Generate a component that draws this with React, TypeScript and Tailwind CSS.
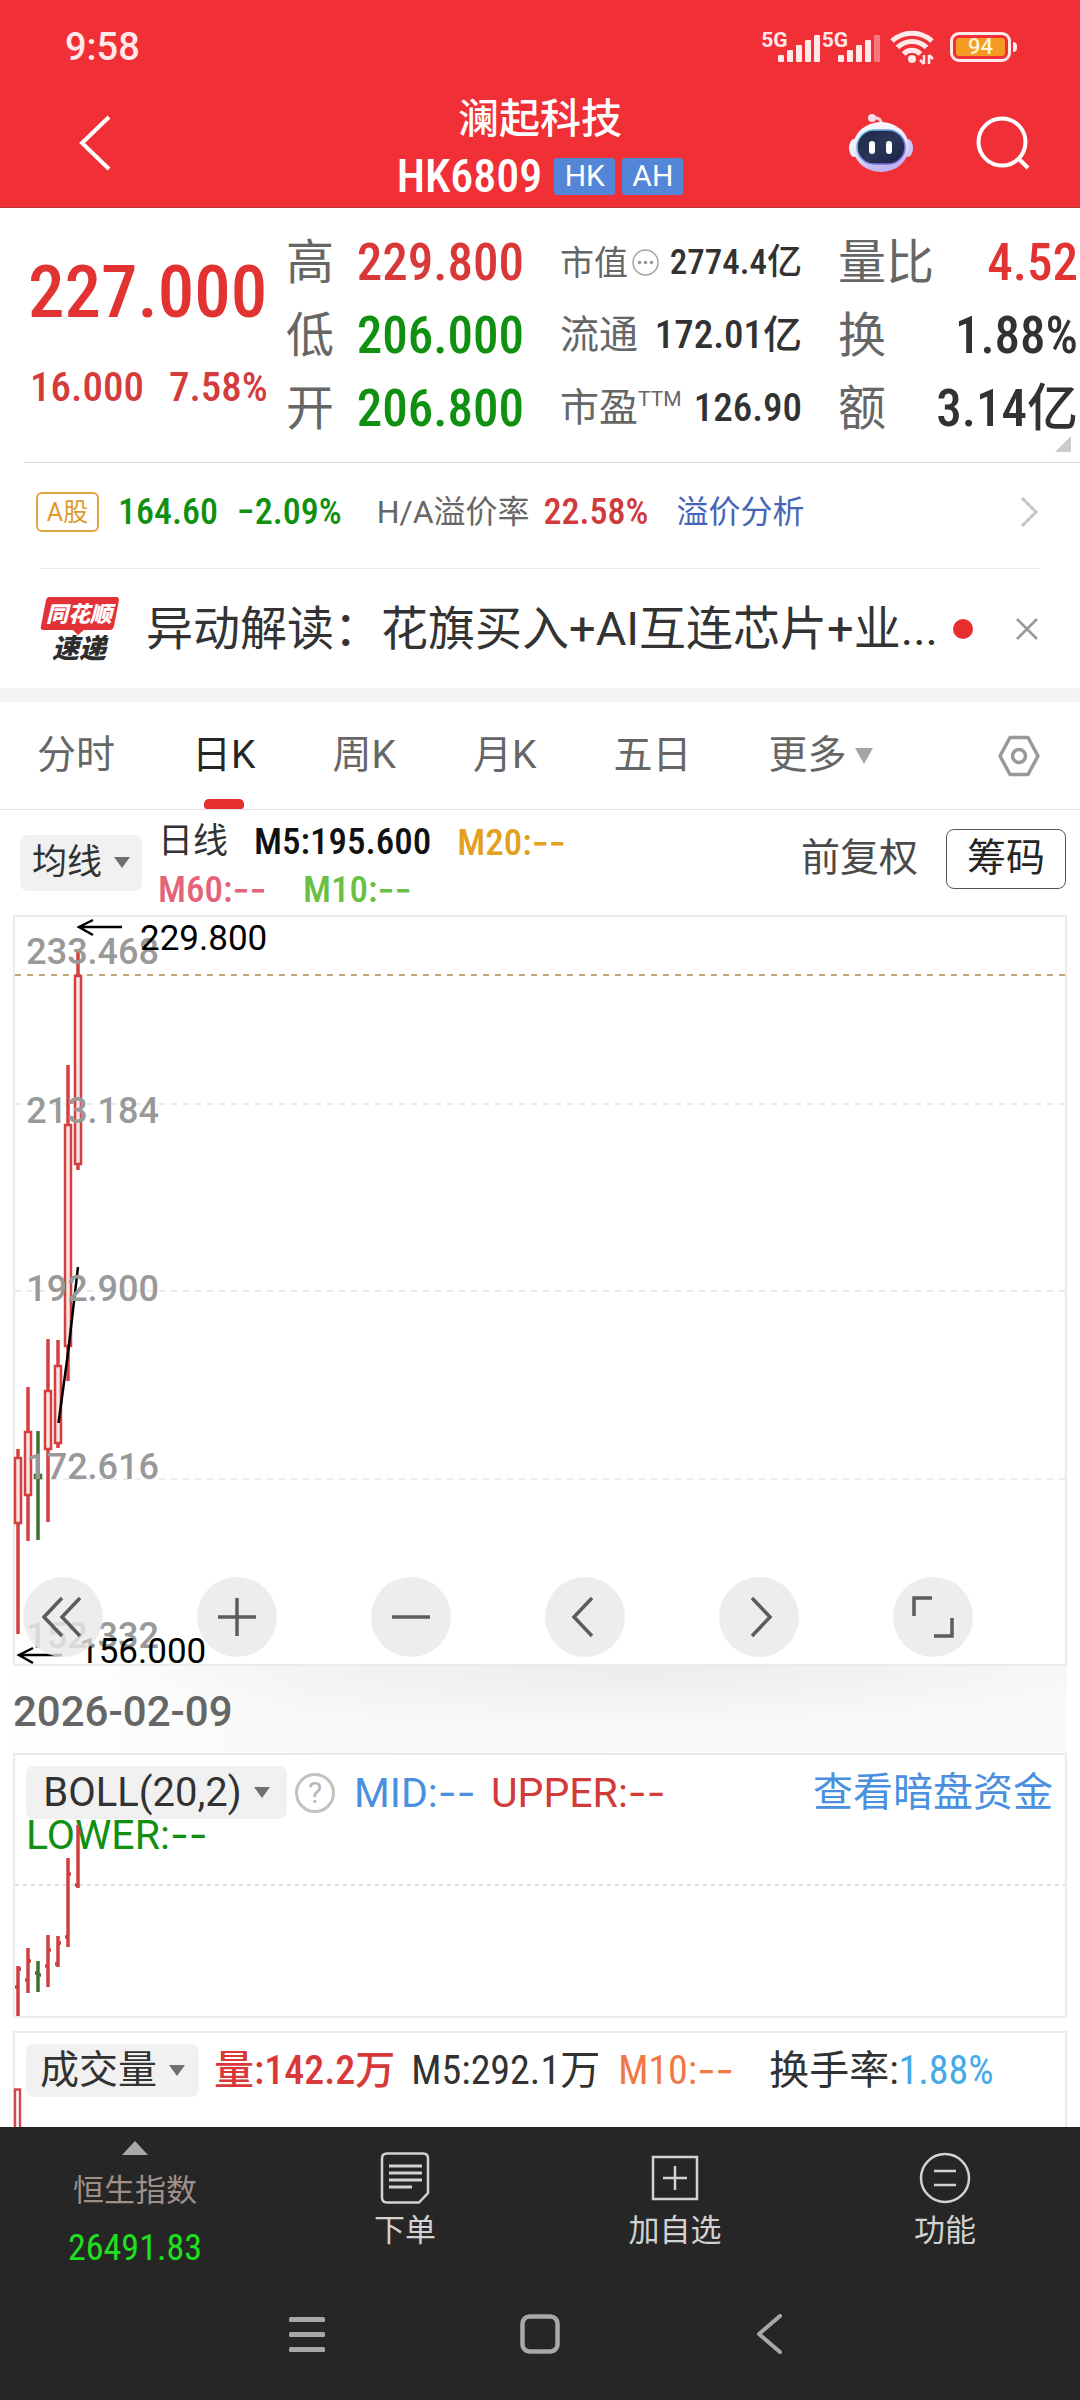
import type { ReactNode } from "react";

type Candle = {
  x: number;
  high: number;
  top: number;
  bottom: number;
  low: number;
  up: boolean;
};

const candles: Candle[] = [
  { x: 5, high: 532, top: 541, bottom: 606, low: 717, up: true },
  { x: 15, high: 470, top: 515, bottom: 578, low: 624, up: true },
  { x: 25, high: 514, top: 558, bottom: 561, low: 623, up: false },
  { x: 35, high: 422, top: 474, bottom: 532, low: 605, up: true },
  { x: 45, high: 423, top: 449, bottom: 526, low: 531, up: true },
  { x: 55, high: 148, top: 208, bottom: 429, low: 464, up: true },
  { x: 65, high: 33, top: 59, bottom: 247, low: 253, up: true },
];

type OhlcBar = { x: number; high: number; open: number; close: number; low: number; up: boolean };

const ohlcBars: OhlcBar[] = [
  { x: 5, high: 211, open: 232, close: 214, low: 264, up: true },
  { x: 15, high: 193, open: 225, close: 206, low: 238, up: true },
  { x: 25, high: 206, open: 218, close: 220, low: 237, up: false },
  { x: 35, high: 180, open: 211, close: 195, low: 232, up: true },
  { x: 45, high: 181, open: 209, close: 188, low: 212, up: true },
  { x: 55, high: 103, open: 182, close: 119, low: 192, up: true },
  { x: 65, high: 70, open: 130, close: 77, low: 133, up: true },
];

const priceLabels = [
  { text: "233.468", y: 47 },
  { text: "213.184", y: 206 },
  { text: "192.900", y: 384 },
  { text: "172.616", y: 562 },
  { text: "152.332", y: 731 },
];

function SignalBars({ weak }: { weak?: boolean }) {
  return (
    <span className="flex items-start">
      <span className="text-[21px] leading-none font-bold">5G</span>
      <svg className="-ml-2.5 h-[34px] w-11" viewBox="0 0 44 34" fill="currentColor" aria-hidden="true">
        <rect x="0" y="25" width="6" height="7" rx="1" />
        <rect x="9" y="20" width="6" height="12" rx="1" />
        <rect x="18" y="15" width="6" height="17" rx="1" />
        <rect x="27" y="10" width="6" height="22" rx="1" />
        <rect x="36" y="5" width="6" height="27" rx="1" opacity={weak ? 0.4 : 1} />
      </svg>
    </span>
  );
}

function StatusBar() {
  return (
    <div className="flex h-[94px] items-center justify-between pr-[63px] pl-[65px] text-[#ffe9e9]">
      <span className="text-[38px] leading-none font-medium">9:58</span>
      <div className="flex items-center">
        <SignalBars />
        <SignalBars weak />
        <svg className="mr-3.5 ml-2 h-9 w-[46px]" viewBox="0 0 46 36" fill="none" stroke="currentColor" strokeWidth="5" aria-hidden="true">
          <path d="M2 12C13 1.5 31 1.5 42 12" />
          <path d="M7.500 18.500C15.500 10.500 28.500 10.500 36.500 18.500" />
          <path d="M13.500 25C18.500 20 25.500 20 30.500 25" />
          <circle cx="22" cy="30" r="4" fill="currentColor" stroke="none" />
          <path d="M34 26v9M30 31l4 4M39 35v-9M43 30l-4-4" strokeWidth="2.500" />
        </svg>
        <span className="flex items-center gap-0.5">
          <span className="flex h-[30px] w-[61px] rounded-[9px] border-[3px] border-current p-[3px]">
            <span className="flex flex-1 items-center justify-center rounded-[3px] bg-[#f59a23] text-[22px] leading-none font-medium text-[#fff3d6]">94</span>
          </span>
          <span className="h-2.5 w-1 rounded-r bg-current" />
        </span>
      </div>
    </div>
  );
}

function Robot() {
  return (
    <svg className="h-[60px] w-16" viewBox="0 0 64 60" aria-hidden="true">
      <defs>
        <linearGradient id="shell" x1="0" y1="0" x2="0.300" y2="1">
          <stop offset="0" stopColor="#fff" />
          <stop offset="0.600" stopColor="#ece4fb" />
          <stop offset="1" stopColor="#bfb4ee" />
        </linearGradient>
        <linearGradient id="visor" x1="0" y1="0" x2="1" y2="1">
          <stop offset="0" stopColor="#1f2745" />
          <stop offset="0.500" stopColor="#2a3558" />
          <stop offset="1" stopColor="#1a2140" />
        </linearGradient>
        <linearGradient id="rim" x1="0" y1="0" x2="1" y2="1">
          <stop offset="0" stopColor="#5fd0e6" />
          <stop offset="1" stopColor="#7a4fe0" />
        </linearGradient>
      </defs>
      <path d="M23 5C29 4 32 6 33 12" stroke="#f3d5e4" strokeWidth="3" fill="none" />
      <circle cx="23" cy="5" r="4" fill="#f7dbe6" />
      <ellipse cx="5" cy="35" rx="5" ry="9" fill="#f4effc" />
      <ellipse cx="59" cy="35" rx="5" ry="9" fill="#cdc4f4" />
      <ellipse cx="32" cy="34" rx="28" ry="25" fill="url(#shell)" />
      <rect x="8" y="17" width="48" height="34" rx="17" fill="url(#visor)" stroke="url(#rim)" strokeWidth="1.500" />
      <rect x="20" y="28" width="6" height="13" rx="3" fill="#fff" />
      <rect x="37" y="28" width="6" height="13" rx="3" fill="#fff" />
    </svg>
  );
}

function Header() {
  return (
    <header className="border-b border-[#b8343c] bg-[#f12f37] text-white">
      <StatusBar />
      <div className="flex h-[113px] justify-between pr-[50px] pl-[78px]">
        <div className="flex flex-1 items-center pb-4">
          <button type="button" aria-label="返回" className="flex">
            <svg className="h-[58px] w-9" viewBox="0 0 36 58" fill="none" stroke="currentColor" strokeWidth="4" aria-hidden="true">
              <path d="M31 3L4 29l27 26" />
            </svg>
          </button>
        </div>
        <div className="-ml-7 flex flex-col items-center">
          <h1 className="text-[41px] leading-[50px] font-medium">澜起科技</h1>
          <div className="mt-[7px] flex h-[50px] items-center">
            <span className="mr-3 font-['Roboto_Condensed',sans-serif] text-[46px] leading-none font-medium">HK6809</span>
            <span className="mr-[7px] flex h-[37px] w-[61px] items-center justify-center rounded-[3px] bg-[#5486d8] text-[30px] leading-none">HK</span>
            <span className="flex h-[37px] w-[61px] items-center justify-center rounded-[3px] bg-[#5486d8] text-[30px] leading-none">AH</span>
          </div>
        </div>
        <div className="flex flex-1 items-center justify-end gap-[63px] pb-4">
          <button type="button" aria-label="智能助手" className="flex">
            <Robot />
          </button>
          <button type="button" aria-label="搜索" className="flex">
            <svg className="h-[54px] w-[54px]" viewBox="0 0 54 54" fill="none" stroke="currentColor" strokeWidth="4" aria-hidden="true">
              <circle cx="26" cy="26" r="23.500" />
              <path d="M42 42l10 10" />
            </svg>
          </button>
        </div>
      </div>
    </header>
  );
}

function QuoteRow({ label, value, small, large }: { label: ReactNode; value: ReactNode; small?: boolean; large?: string }) {
  const labelSize = large ? "text-[48px]" : small ? "text-[34px]" : "text-[39px]";
  const valueSize = large ? "text-[51px]" : small ? "text-[35px]" : "text-[39px]";
  const color = large ?? "text-[#323232]";
  return (
    <div className="flex h-[73px] items-center justify-between whitespace-nowrap">
      <dt className={`flex items-center leading-none text-[#666] ${labelSize}`}>{label}</dt>
      <dd className={`font-['Roboto_Condensed','Noto_Sans_CJK_SC',sans-serif] leading-none font-medium ${valueSize} ${color}`}>{value}</dd>
    </div>
  );
}

function Quote() {
  return (
    <section className="relative h-[254px] pt-[18px] pr-0.5 pl-7">
      <div className="grid grid-cols-[minmax(0,222fr)_minmax(0,238fr)_minmax(0,242fr)_minmax(0,240fr)] gap-x-9">
        <div className="font-['Roboto_Condensed',sans-serif] font-medium whitespace-nowrap text-[#e23333]">
          <p className="mt-[26px] text-[73px] leading-[80px]">227.000</p>
          <p className="mt-[30px] flex gap-[25px] pl-0.5 text-[41px] leading-[50px] text-[#d43b3b]">
            <span>16.000</span>
            <span>7.58%</span>
          </p>
        </div>
        <dl>
          <QuoteRow label="高" value="229.800" large="text-[#d93838]" />
          <QuoteRow label="低" value="206.000" large="text-[#0f9010]" />
          <QuoteRow label="开" value="206.800" large="text-[#0f9010]" />
        </dl>
        <dl>
          <QuoteRow
            small
            label={
              <>
                市值
                <svg className="ml-1 h-[27px] w-[27px]" viewBox="0 0 27 27" fill="none" aria-hidden="true">
                  <circle cx="13.500" cy="13.500" r="12.500" stroke="#a3a3a3" strokeWidth="1.500" />
                  <g fill="#999">
                    <circle cx="7.500" cy="13.500" r="1.800" />
                    <circle cx="13.500" cy="13.500" r="1.800" />
                    <circle cx="19.500" cy="13.500" r="1.800" />
                  </g>
                </svg>
              </>
            }
            value="2774.4亿"
          />
          <QuoteRow label="流通" value="172.01亿" />
          <QuoteRow
            label={
              <>
                市盈<span className="self-start text-[21px] leading-none">TTM</span>
              </>
            }
            value="126.90"
          />
        </dl>
        <dl>
          <QuoteRow label="量比" value="4.52" large="text-[#e23333]" />
          <QuoteRow label="换" value="1.88%" large="text-[#323232]" />
          <QuoteRow label="额" value="3.14亿" large="text-[#323232]" />
        </dl>
      </div>
      <svg className="absolute right-[9px] bottom-2.5 h-4 w-4" viewBox="0 0 16 16" aria-hidden="true">
        <path d="M16 0v16H0z" fill="#ccc" />
      </svg>
    </section>
  );
}

function PremiumRow() {
  return (
    <section className="ml-6 border-t border-[#dcdcdc]">
      <div className="ml-3 flex h-[105px] items-center pr-10 pb-[7px] leading-none whitespace-nowrap">
        <span className="flex h-10 w-[63px] items-center justify-center rounded-md border-2 border-[#e2a443] text-[25px] text-[#e09a2c]">A股</span>
        <span className="ml-[19px] font-['Roboto_Condensed',sans-serif] text-[36px] font-medium text-[#0f9010]">164.60</span>
        <span className="ml-[19px] font-['Roboto_Condensed',sans-serif] text-[36px] font-medium text-[#0f9010]">−2.09%</span>
        <span className="ml-[35px] text-[32px] text-[#666]">H/A溢价率</span>
        <span className="ml-3.5 font-['Roboto_Condensed',sans-serif] text-[36px] font-medium text-[#cf3b3b]">22.58%</span>
        <a href="#premium" className="ml-7 text-[32px] text-[#4565b8]">溢价分析</a>
        <svg className="ml-auto h-8 w-5" viewBox="0 0 20 32" fill="none" stroke="#c6c6c6" strokeWidth="3" aria-hidden="true">
          <path d="M2 2l14 14L2 30" />
        </svg>
      </div>
    </section>
  );
}

function NewsRow() {
  return (
    <section className="mx-10 flex h-[120px] items-center border-t border-[#ebebeb]">
      <svg className="h-[66px] w-[80px] shrink-0 overflow-visible" viewBox="0 0 80 66" role="img" aria-label="同花顺速递">
        <path d="M9 1H76q3 0 3 3L74 30q-1 4-4 4H44l-6 5-5-5H3q-3 0-2-4L6 4q1-3 3-3z" fill="#e23237" />
        <text x="39" y="26" textAnchor="middle" className="text-[22px] font-black italic" fill="#fff">同花顺</text>
        <text x="39" y="62" textAnchor="middle" className="text-[27px] font-black italic" fill="#2d2d2d">速递</text>
      </svg>
      <a href="#news" className="ml-[26px] min-w-0 text-[47px] leading-[66px] whitespace-nowrap text-[#333]">异动解读：花旗买入+AI互连芯片+业...</a>
      <span className="ml-auto h-5 w-5 shrink-0 rounded-full bg-[#e62e2e]" />
      <button type="button" aria-label="关闭" className="mr-0.5 ml-[43px] flex shrink-0">
        <svg className="h-[22px] w-[22px]" viewBox="0 0 22 22" stroke="#999" strokeWidth="2.500" aria-hidden="true">
          <path d="M1 1l20 20M21 1L1 21" />
        </svg>
      </button>
    </section>
  );
}

function Caret({ color = "#6f6f6f", big }: { color?: string; big?: boolean }) {
  return (
    <svg className={big ? "h-4 w-[18px]" : "h-[11px] w-4"} viewBox="0 0 16 11" preserveAspectRatio="none" aria-hidden="true">
      <path d="M0 0h16L8 11z" fill={color} />
    </svg>
  );
}

/* Placeholder for an average that has no value yet. */
function NoValue() {
  return <span className="font-['Inter',sans-serif]">--</span>;
}

function Tabs() {
  const tabs = ["分时", "日K", "周K", "月K", "五日"];
  return (
    <nav className="box-content flex h-[107px] items-center gap-[77px] border-t-[14px] border-b border-t-[#f4f4f4] border-b-[#e3e3e3] pr-10 pl-[37px] text-[39px] leading-none whitespace-nowrap text-[#666]">
      {tabs.map((tab) => (
        <button key={tab} type="button" className={tab === "日K" ? "relative h-full text-[#262626]" : "h-full"}>
          {tab}
          {tab === "日K" && <span className="absolute bottom-0 left-1/2 h-2.5 w-10 -translate-x-1/2 rounded-t-[5px] rounded-b-[3px] bg-[#e62e2e]" />}
        </button>
      ))}
      <button type="button" className="flex h-full items-center gap-2">
        更多
        <Caret color="#a5a5a5" big />
      </button>
      <button type="button" aria-label="设置" className="ml-auto flex">
        <svg className="h-[42px] w-[42px]" viewBox="0 0 42 42" fill="none" stroke="#999" strokeWidth="3.500" strokeLinejoin="round" aria-hidden="true">
          <path d="M12 2.500h18L40 21 30 39.500H12L2 21z" />
          <circle cx="21" cy="21" r="6.500" />
        </svg>
      </button>
    </nav>
  );
}

function MaRow() {
  return (
    <section className="flex h-[105px] items-center justify-between pr-3.5 pl-5">
      <div className="flex items-center">
        <button type="button" aria-haspopup="listbox" className="flex h-14 w-[122px] items-center justify-center gap-3 rounded-lg bg-[#f1f1f1] text-[35px] leading-none text-[#323232]">
          均线
          <Caret />
        </button>
        <div className="mt-1.5 ml-4 font-['Roboto_Condensed','Noto_Sans_CJK_SC',sans-serif] text-[37px] leading-[46px] font-medium whitespace-nowrap">
          <div className="flex">
            <span className="mr-[26px] text-[35px] font-normal text-[#323232]">日线</span>
            <span className="mr-[26px] text-[#111]">M5:195.600</span>
            <span className="text-[#e2a01e]">
              M20:
              <NoValue />
            </span>
          </div>
          <div className="flex">
            <span className="mr-7 min-w-[117px] text-[#e5637a]">
              M60:
              <NoValue />
            </span>
            <span className="text-[#6abf45]">
              M10:
              <NoValue />
            </span>
          </div>
        </div>
      </div>
      <div className="mb-2 flex items-center gap-7 text-[39px] leading-none">
        <button type="button" className="text-[#4a4a4a]">前复权</button>
        <button type="button" className="flex h-[60px] w-[120px] items-center justify-center rounded-lg border border-[#555] text-[#262626]">筹码</button>
      </div>
    </section>
  );
}

function ControlButton({ label, children }: { label: string; children: ReactNode }) {
  return (
    <button type="button" aria-label={label} className="flex h-20 w-20 items-center justify-center rounded-full bg-[#e9e9e9]/80">
      <svg className="h-[42px] w-[42px]" viewBox="0 0 42 42" fill="none" stroke="#5c5c5c" strokeWidth="3.500" aria-hidden="true">
        {children}
      </svg>
    </button>
  );
}

function KLineChart() {
  return (
    <section className="relative mx-[13px] h-[751px] border-2 border-[#ebebeb]">
      <svg className="absolute inset-0 h-full w-full overflow-visible" role="img" aria-label="日K线图">
        <g stroke="#ececec" strokeWidth="2" strokeDasharray="6 6">
          <line x1="0" x2="100%" y1="187" y2="187" />
          <line x1="0" x2="100%" y1="374" y2="374" />
          <line x1="0" x2="100%" y1="562" y2="562" />
        </g>
        <line x1="0" x2="100%" y1="58" y2="58" stroke="#bfa778" strokeWidth="2" strokeDasharray="6 6" />
        {candles.map((c) => (
          <g key={c.x} stroke={c.up ? "#d43f3f" : "#3f7030"} strokeWidth="3.500" transform="translate(-2 0)">
            <line x1={c.x} x2={c.x} y1={c.high} y2={c.top} />
            <rect x={c.x - 3} y={c.top} width="6" height={c.bottom - c.top} fill={c.up ? "#fbe3e3" : "#3f7030"} strokeWidth="2.500" />
            <line x1={c.x} x2={c.x} y1={c.bottom} y2={c.low} />
          </g>
        ))}
        <path d="M43.500 506L53 436 63 350" fill="none" stroke="#000" strokeWidth="2.500" />
        <g fill="none" stroke="#000" strokeWidth="2.500">
          <path d="M107 10H64M78 3L64 10l14 8" />
          <path d="M47 738H4M18 731L4 738l14 8" />
        </g>
        <g fill="#999" className="text-[36px] font-medium">
          {priceLabels.map((p) => (
            <text key={p.text} x="144" y={p.y} textAnchor="end">
              {p.text}
            </text>
          ))}
        </g>
        <g fill="#000" className="text-[35px]">
          <text x="125" y="33">229.800</text>
          <text x="64" y="746">156.000</text>
        </g>
      </svg>
      <div className="absolute bottom-[7px] left-2 flex gap-[94px]">
        <ControlButton label="最左">
          <path d="M20 2L2 21l18 19M38 2L20 21l18 19" />
        </ControlButton>
        <ControlButton label="放大">
          <path d="M21 2v38M2 21h38" />
        </ControlButton>
        <ControlButton label="缩小">
          <path d="M2 21h38" />
        </ControlButton>
        <ControlButton label="左移">
          <path d="M28 2L10 21l18 19" />
        </ControlButton>
        <ControlButton label="右移">
          <path d="M14 2l18 19-18 19" />
        </ControlButton>
        <ControlButton label="全屏">
          <path d="M2 20V2h18M40 22v18H22" />
        </ControlButton>
      </div>
    </section>
  );
}

function BollChart() {
  return (
    <section className="relative mx-[13px] h-[265px] border-2 border-[#ebebeb]">
      <div className="flex items-center pt-[11px] pr-3 pl-[11px] text-[41px] leading-none whitespace-nowrap">
        <button type="button" aria-haspopup="listbox" className="flex h-[53px] w-[261px] items-center justify-center gap-3 rounded-lg bg-[#f1f1f1] text-[40px] leading-none text-[#323232]">
          BOLL(20,2)
          <Caret />
        </button>
        <button type="button" aria-label="指标说明" className="ml-2 flex h-10 w-10 items-center justify-center rounded-full border-[3px] border-[#c2c2c2] text-[30px] leading-none text-[#b5b5b5]">?</button>
        <span className="ml-[19px] min-w-[137px] text-[#4a8fe0]">
          MID:
          <NoValue />
        </span>
        <span className="text-[#d23a3a]">
          UPPER:
          <NoValue />
        </span>
        <a href="#funds" className="ml-auto text-[40px] text-[#4a8fe0]">查看暗盘资金</a>
      </div>
      <p className="pl-[11px] text-[41px] leading-[30px] text-[#0f9010]">
        LOWER:
        <NoValue />
      </p>
      <svg className="absolute inset-0 h-full w-full" role="img" aria-label="BOLL指标图">
        <line x1="0" x2="100%" y1="130" y2="130" stroke="#dadada" strokeWidth="1.500" strokeDasharray="4 4" />
        {ohlcBars.map((b) => (
          <g key={b.x} stroke={b.up ? "#cf3f3f" : "#3f7030"} strokeWidth="3.500" transform="translate(-2 0)">
            <path d={`M${b.x} ${b.high}V${b.low}M${b.x} ${b.open}h-3M${b.x} ${b.close}h3`} />
          </g>
        ))}
      </svg>
    </section>
  );
}

function VolumeChart() {
  return (
    <section className="relative mx-[13px] mt-[13px] h-24 border-2 border-b-0 border-[#ebebeb]">
      <div className="flex items-center pt-[11px] pl-[11px] font-['Roboto_Condensed','Noto_Sans_CJK_SC',sans-serif] text-[40px] leading-none whitespace-nowrap">
        <button type="button" aria-haspopup="listbox" className="flex h-[53px] w-[173px] items-center justify-center gap-3 rounded-lg bg-[#f1f1f1] text-[39px] leading-none text-[#323232]">
          成交量
          <Caret />
        </button>
        <span className="ml-[15px] font-medium text-[#d93838]">量:142.2万</span>
        <span className="ml-4 text-[#323232]">M5:292.1万</span>
        <span className="ml-[18px] min-w-[131px] text-[#f07845]">
          M10:
          <NoValue />
        </span>
        <span className="ml-5 text-[#323232]">
          换手率:<span className="text-[#45a9e8]">1.88%</span>
        </span>
      </div>
      <svg className="absolute bottom-0 -left-0.5 h-[39px] w-2.5" viewBox="0 0 10 39" aria-hidden="true">
        <path d="M2 40V1.500h5V40" fill="none" stroke="#cf4a4a" strokeWidth="2.500" />
      </svg>
    </section>
  );
}

function NavItem({ label, children }: { label: string; children: ReactNode }) {
  return (
    <button type="button" className="flex flex-col items-center gap-[11px] pt-[25px] text-[31px] leading-none text-[#d2d2d2]">
      <svg className="h-[52px] w-[52px]" viewBox="0 0 52 52" fill="none" stroke="currentColor" strokeWidth="2.500" aria-hidden="true">
        {children}
      </svg>
      {label}
    </button>
  );
}

function BottomNav() {
  return (
    <footer className="bg-[#262626]">
      <nav className="grid h-[150px] grid-cols-4">
        <button type="button" className="flex flex-col items-center pt-3.5 text-[31px] leading-none text-[#9f8f89]">
          <svg className="h-[14px] w-[26px]" viewBox="0 0 26 14" aria-hidden="true">
            <path d="M13 0l13 14H0z" fill="#a9a9a9" />
          </svg>
          <span className="mt-5">恒生指数</span>
          <span className="mt-6 font-['Roboto_Condensed',sans-serif] text-[36px] text-[#1fe01f]">26491.83</span>
        </button>
        <NavItem label="下单">
          <path d="M8 1.500h36q5 0 5 5V41l-9 9.500H8q-5 0-5-5v-39q0-5 5-5z" />
          <path d="M10 14h33M10 21h33M10 28h33M10 35h23" strokeWidth="3" />
        </NavItem>
        <NavItem label="加自选">
          <path d="M4 5h44v42H4zM26 14v24M14 26h24" />
        </NavItem>
        <NavItem label="功能">
          <circle cx="26" cy="26" r="24" />
          <path d="M15 19h22M15 33h22" />
        </NavItem>
      </nav>
      <div className="flex h-[123px] items-center justify-center gap-[195px] pb-[9px] text-[#a8a8a8]">
        <button type="button" aria-label="最近任务" className="flex">
          <svg className="h-10 w-9" viewBox="0 0 36 40" fill="currentColor" aria-hidden="true">
            <rect y="3" width="36" height="5" rx="1.500" />
            <rect y="18" width="36" height="5" rx="1.500" />
            <rect y="33" width="36" height="5" rx="1.500" />
          </svg>
        </button>
        <button type="button" aria-label="主屏幕" className="flex">
          <svg className="h-10 w-10" viewBox="0 0 40 40" fill="none" stroke="currentColor" strokeWidth="4.500" aria-hidden="true">
            <rect x="2.500" y="2.500" width="35" height="35" rx="7" />
          </svg>
        </button>
        <button type="button" aria-label="系统返回" className="flex">
          <svg className="h-10 w-9" viewBox="0 0 36 40" fill="none" stroke="currentColor" strokeWidth="4" strokeLinecap="round" strokeLinejoin="round" aria-hidden="true">
            <path d="M25 2L4 20l21 18" />
          </svg>
        </button>
      </div>
    </footer>
  );
}

export default function App() {
  return (
    <div className="flex min-h-screen flex-col bg-white font-['Roboto','Noto_Sans_CJK_SC',sans-serif]">
      <Header />
      <main className="flex-1">
        <Quote />
        <PremiumRow />
        <NewsRow />
        <Tabs />
        <MaRow />
        <KLineChart />
        <div className="mr-[13px] flex h-[87px] items-center bg-[radial-gradient(ellipse_50%_70%_at_60%_0%,#ececec,transparent),linear-gradient(to_right,#ffffff,#f8f8f8_30%,#fafafa)] pt-1 pl-[13px] text-[42px] leading-none font-medium text-[#666]">
          2026-02-09
        </div>
        <BollChart />
        <VolumeChart />
      </main>
      <BottomNav />
    </div>
  );
}
